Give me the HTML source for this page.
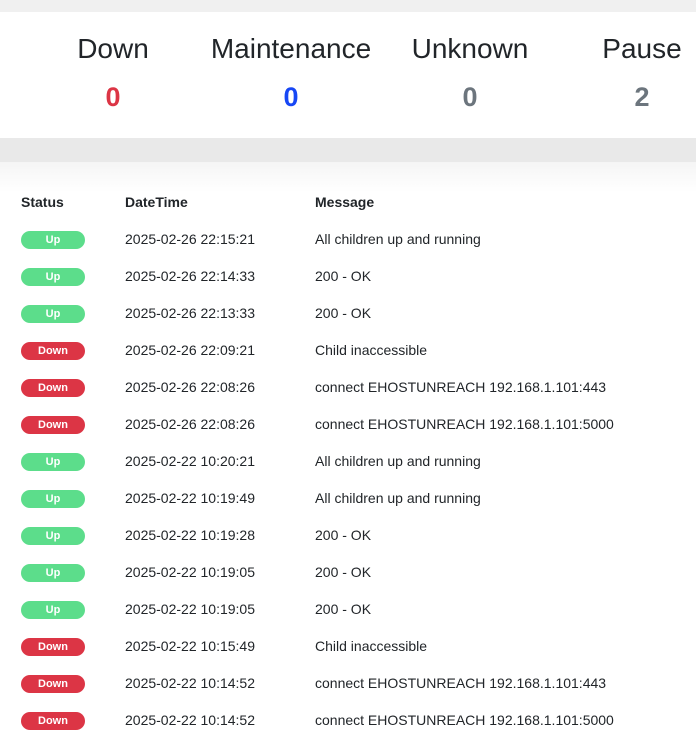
<!DOCTYPE html>
<html><head><style>
html,body{margin:0;width:696px;height:738px;overflow:hidden}
body{background:#f0f0f0;font-family:"Liberation Sans",sans-serif;color:#212529;position:relative}
.card1{position:absolute;left:0;top:12px;width:696px;height:126px;background:#fff}
.card2{position:absolute;left:0;top:162px;width:696px;height:600px;background:linear-gradient(#f5f5f5,#fff 30px)}
.band{position:absolute;left:0;top:138px;width:696px;height:24px;background:#e9e9e9}
.lab{position:absolute;top:33px;font-size:28px;transform:translateX(-50%);white-space:nowrap}
.num{position:absolute;top:82px;font-size:27px;font-weight:bold;transform:translateX(-50%)}
.t{position:absolute;font-size:14px;white-space:nowrap}
.h{font-weight:bold}
.b{position:absolute;left:21px;width:64px;height:18px;border-radius:9px;color:#fff;font-size:11px;font-weight:bold;text-align:center;line-height:18px}
.u{background:#5cdd8b}.d{background:#dc3545}
</style></head><body>
<div class="card1"></div><div class="band"></div><div class="card2"></div>
<div class="lab" style="left:113px">Down</div>
<div class="lab" style="left:291px">Maintenance</div>
<div class="lab" style="left:470px">Unknown</div>
<div class="lab" style="left:642px">Pause</div>
<div class="num" style="left:113px;color:#dc3545">0</div>
<div class="num" style="left:291px;color:#1747f5">0</div>
<div class="num" style="left:470px;color:#6c757d">0</div>
<div class="num" style="left:642px;color:#6c757d">2</div>
<div class="t h" style="left:21px;top:194px">Status</div>
<div class="t h" style="left:125px;top:194px">DateTime</div>
<div class="t h" style="left:315px;top:194px">Message</div>
<div id="rows"></div>
<script>
var r=[["u","2025-02-26 22:15:21","All children up and running"],["u","2025-02-26 22:14:33","200 - OK"],["u","2025-02-26 22:13:33","200 - OK"],["d","2025-02-26 22:09:21","Child inaccessible"],["d","2025-02-26 22:08:26","connect EHOSTUNREACH 192.168.1.101:443"],["d","2025-02-26 22:08:26","connect EHOSTUNREACH 192.168.1.101:5000"],["u","2025-02-22 10:20:21","All children up and running"],["u","2025-02-22 10:19:49","All children up and running"],["u","2025-02-22 10:19:28","200 - OK"],["u","2025-02-22 10:19:05","200 - OK"],["u","2025-02-22 10:19:05","200 - OK"],["d","2025-02-22 10:15:49","Child inaccessible"],["d","2025-02-22 10:14:52","connect EHOSTUNREACH 192.168.1.101:443"],["d","2025-02-22 10:14:52","connect EHOSTUNREACH 192.168.1.101:5000"]];
var h="";r.forEach(function(x,i){var c=240+i*37;h+='<div class="b '+x[0]+'" style="top:'+(c-9)+'px">'+(x[0]=="u"?"Up":"Down")+'</div><div class="t" style="left:125px;top:'+(c-9)+'px">'+x[1]+'</div><div class="t" style="left:315px;top:'+(c-9)+'px">'+x[2]+'</div>';});
document.getElementById("rows").innerHTML=h;
</script>
</body></html>
